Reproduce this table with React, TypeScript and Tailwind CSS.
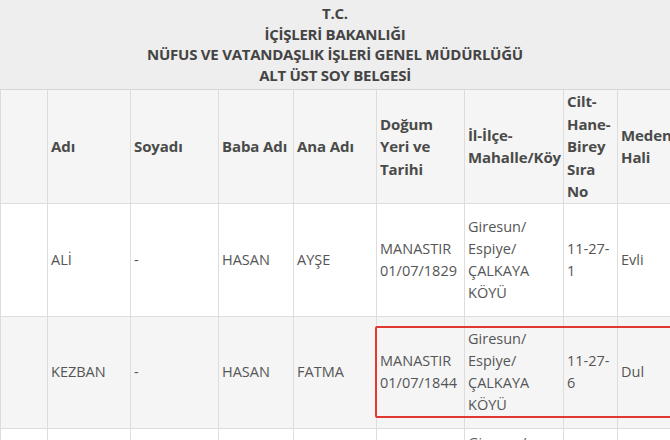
import React from "react";

const cols = [47, 83, 88, 75, 83, 88, 99, 54, 110];

type Row = string[][];

const headers: string[][] = [
  [""],
  ["Adı"],
  ["Soyadı"],
  ["Baba Adı"],
  ["Ana Adı"],
  ["Doğum", "Yeri ve", "Tarihi"],
  ["İl-İlçe-", "Mahalle/Köy"],
  ["Cilt-", "Hane-", "Birey", "Sıra", "No"],
  ["Medeni", "Hali"],
];

const rows: { cells: Row; bg: string; h: string }[] = [
  {
    cells: [
      [""],
      ["ALİ"],
      ["-"],
      ["HASAN"],
      ["AYŞE"],
      ["MANASTIR", "01/07/1829"],
      ["Giresun/", "Espiye/", "ÇALKAYA", "KÖYÜ"],
      ["11-27-", "1"],
      ["Evli"],
    ],
    bg: "bg-white",
    h: "h-[113px]",
  },
  {
    cells: [
      [""],
      ["KEZBAN"],
      ["-"],
      ["HASAN"],
      ["FATMA"],
      ["MANASTIR", "01/07/1844"],
      ["Giresun/", "Espiye/", "ÇALKAYA", "KÖYÜ"],
      ["11-27-", "6"],
      ["Dul"],
    ],
    bg: "bg-[#f5f5f5]",
    h: "h-[112px]",
  },
];

const row3: string[][] = [
  [""],
  [""],
  [""],
  [""],
  [""],
  [""],
  ["Giresun/", "Espiye/", "ÇALKAYA", "KÖYÜ"],
  [""],
  [""],
];

export default function App() {
  return (
    <div
      className="w-[670px] h-[440px] overflow-hidden bg-white"
      style={{ fontFamily: '"Open Sans", "Noto Sans", sans-serif' }}
    >
      <div className="h-[90px] bg-[#eeeeee] border-b border-[#d6d6d6] pt-[3px] flex flex-col items-center text-[15px] leading-[20.5px] font-bold text-[#444444] tracking-[-0.25px]">
        <div>T.C.</div>
        <div>İÇİŞLERİ BAKANLIĞI</div>
        <div>NÜFUS VE VATANDAŞLIK İŞLERİ GENEL MÜDÜRLÜĞÜ</div>
        <div>ALT ÜST SOY BELGESİ</div>
      </div>
      <div className="relative">
        <table className="table-fixed border-collapse w-[727px] text-[14px] leading-[22px]">
          <colgroup>
            {cols.map((w, i) => (
              <col key={i} style={{ width: w }} />
            ))}
          </colgroup>
          <thead>
            <tr className="h-[113px] bg-[#f4f5f4]">
              {headers.map((c, i) => (
                <th
                  key={i}
                  className="border-x border-b border-[#dddddd] pl-[3px] pr-0 align-middle text-left text-[15px] leading-[22.5px] font-bold text-[#4a4a4a] whitespace-nowrap tracking-[-0.1px]"
                >
                  {c.map((l, j) => (
                    <div key={j}>{l}</div>
                  ))}
                </th>
              ))}
            </tr>
          </thead>
          <tbody>
            {rows.map((r, ri) => (
              <tr key={ri} className={`${r.h} ${r.bg}`}>
                {r.cells.map((c, i) => (
                  <td
                    key={i}
                    className="border-x border-b border-[#dddddd] pl-[3px] align-middle text-[14.5px] text-[#555555] whitespace-nowrap"
                  >
                    {c.map((l, j) => (
                      <div key={j}>{l}</div>
                    ))}
                  </td>
                ))}
              </tr>
            ))}
            <tr className="bg-white">
              {row3.map((c, i) => (
                <td
                  key={i}
                  className="border-x border-b border-[#dddddd] pl-[3px] pt-[3px] pb-[8px] align-top text-[14.5px] text-[#555555] whitespace-nowrap"
                >
                  {c.map((l, j) => (
                    <div key={j}>{l}</div>
                  ))}
                </td>
              ))}
            </tr>
          </tbody>
        </table>
        <div className="absolute left-[375px] top-[236px] w-[320px] h-[92px] border-2 border-[#e2382f] rounded-[2px] pointer-events-none" />
      </div>
    </div>
  );
}
